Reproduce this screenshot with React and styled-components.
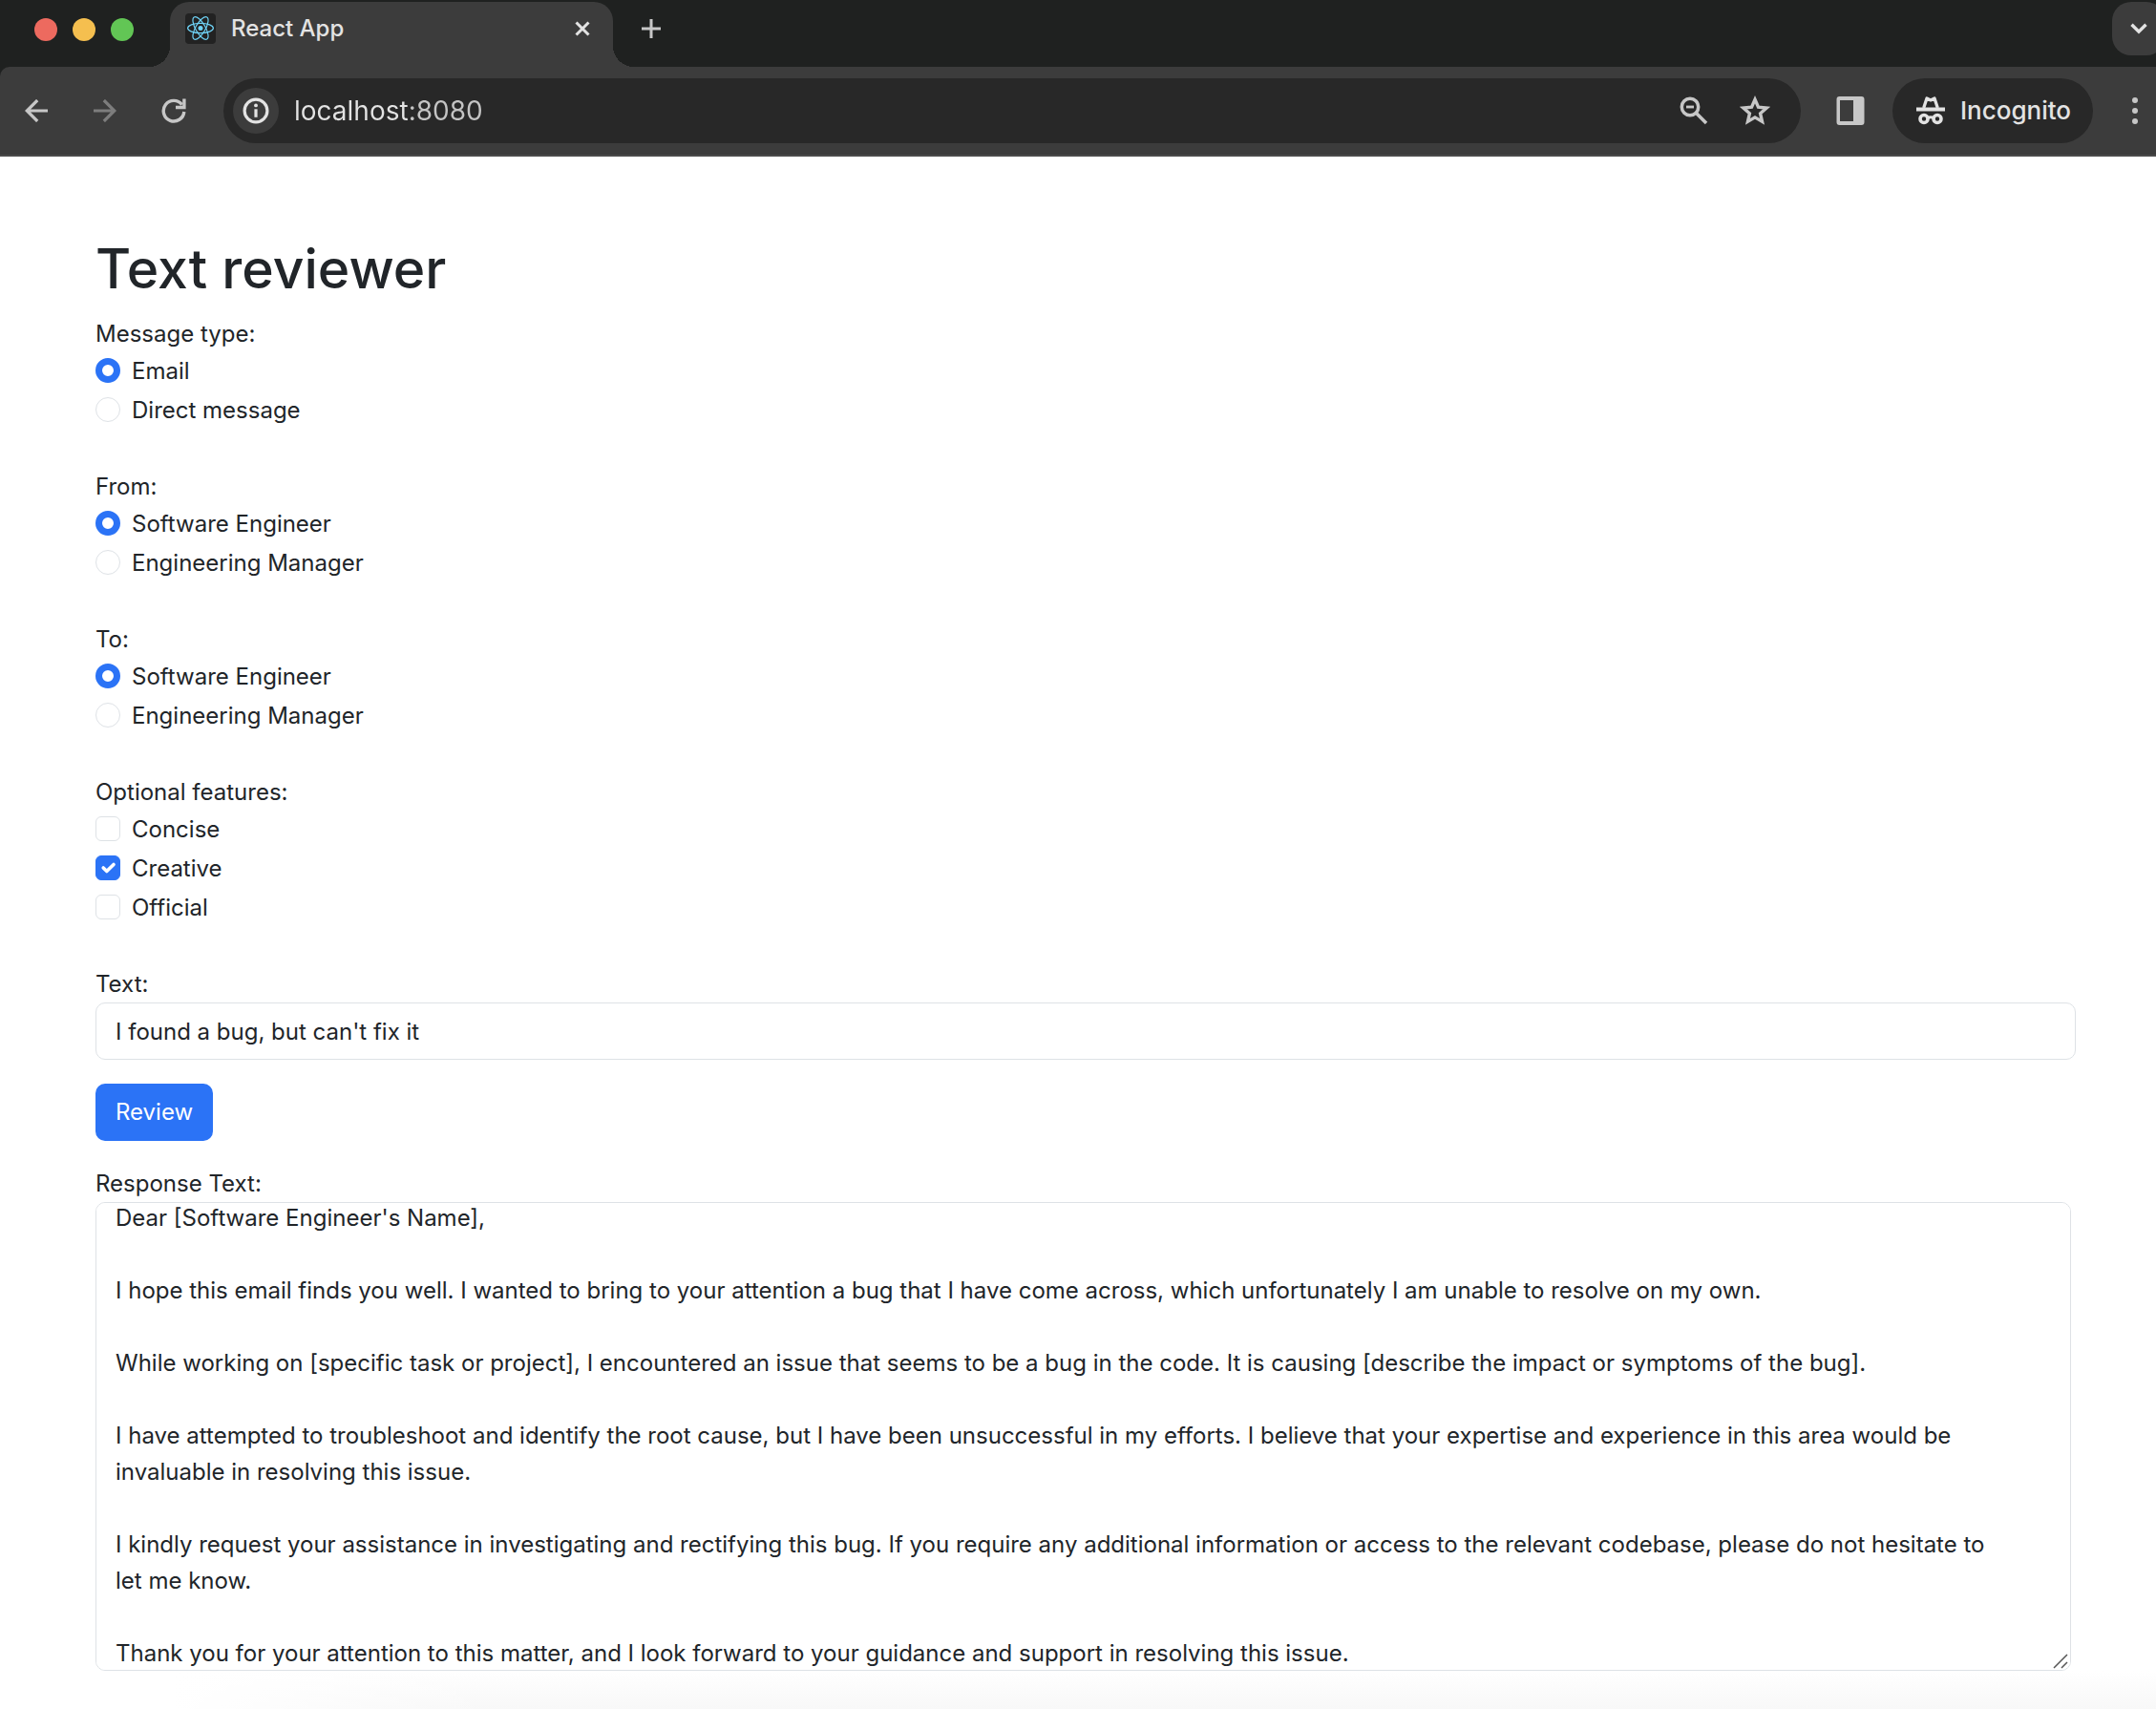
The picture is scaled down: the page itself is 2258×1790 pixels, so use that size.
import React, { useLayoutEffect, useRef, useState } from "react";
import styled, { createGlobalStyle } from "styled-components";

const GlobalStyle = createGlobalStyle`
  *, *::before, *::after { box-sizing: border-box; }
  body {
    margin: 0;
    background: #fff;
    color: #212529;
    font-family: Inter, "Liberation Sans", sans-serif;
    font-size: 24px;
    line-height: 38px;
  }
  button, input, textarea { font: inherit; color: inherit; }
  button { border: 0; padding: 0; background: none; cursor: pointer; }
`;

const Page = styled.div`
  display: flex;
  flex-direction: column;
  min-height: 100vh;
`;

/* ---------- Browser chrome ---------- */

const Chrome = styled.header`
  background: #1f2120;
  color: #e3e3e3;
`;

const TabStrip = styled.div`
  display: flex;
  height: 70px;
  padding: 2px 0 0 36px;
  overflow: hidden;
`;

const Lights = styled.div`
  display: flex;
  align-items: center;
  gap: 16px;
  height: 58px;
  margin-right: 38px;
`;

const Light = styled.button`
  width: 24px;
  height: 24px;
  border-radius: 50%;
  background: ${(p) => p.$color};
`;

const Tab = styled.div`
  position: relative;
  display: flex;
  align-items: center;
  gap: 16px;
  width: 464px;
  padding: 0 18px 12px 16px;
  border-radius: 20px 20px 0 0;
  background: #3c3c3c;

  &::before,
  &::after {
    content: "";
    position: absolute;
    bottom: 0;
    width: 22px;
    height: 22px;
  }
  &::before {
    right: 100%;
    background: radial-gradient(circle at 0 0, transparent 22px, #3c3c3c 22px);
  }
  &::after {
    left: 100%;
    background: radial-gradient(circle at 100% 0, transparent 22px, #3c3c3c 22px);
  }
`;

const TabTitle = styled.span`
  flex: 1;
  font-weight: 500;
`;

const IconButton = styled.button`
  display: grid;
  place-items: center;
  flex: none;
  width: ${(p) => p.$width || 40}px;
  height: 56px;
  color: ${(p) => (p.$dim ? "#7d7d7d" : "#c7c7c7")};
`;

const CloseTab = styled(IconButton)`
  color: #e3e3e3;
`;

const NewTab = styled(IconButton)`
  margin-left: 20px;
`;

const TabSearch = styled(IconButton)`
  margin: 0 -10px 0 auto;
  border-radius: 20px;
  background: #3c3c3c;
  color: #e3e3e3;
`;

const Toolbar = styled.div`
  display: flex;
  align-items: center;
  gap: 32px;
  padding: 12px 2px 12px 18px;
  border-bottom: 2px solid #4a4a4a;
  border-top-left-radius: 10px;
  background: #3c3c3c;
`;

const Omnibox = styled.div`
  flex: 1;
  display: flex;
  align-items: center;
  gap: 16px;
  height: 68px;
  padding: 0 24px 0 10px;
  border-radius: 34px;
  background: #282828;
`;

const SiteInfo = styled.button`
  display: grid;
  place-items: center;
  flex: none;
  width: 48px;
  height: 48px;
  border-radius: 50%;
  background: #3c3c3c;
  color: #e3e3e3;
`;

const Address = styled.input`
  flex: 1;
  min-width: 0;
  padding: 0;
  border: 0;
  outline: 0;
  font-size: 28px;
  color: transparent;
  caret-color: #e3e3e3;
  background: linear-gradient(to right, #e3e3e3 120px, #c4c4c4 120px);
  background-clip: text;
`;

const ToolbarEnd = styled.div`
  display: flex;
  align-items: center;
  gap: 24px;
`;

const Incognito = styled.button`
  display: flex;
  align-items: center;
  gap: 16px;
  width: 210px;
  height: 68px;
  padding-left: 25px;
  border-radius: 34px;
  background: #282828;
  color: #e3e3e3;
  font-size: 26px;
  font-weight: 500;
`;

/* ---------- Form ---------- */

const Main = styled.main`
  flex: 1;
  padding: 80px 84px 40px 100px;
  background:
    linear-gradient(to right, #fff 180px, transparent 520px) bottom / 100% 40px no-repeat,
    linear-gradient(to top, #f8f8f8, #fff) bottom / 100% 40px no-repeat;
`;

const Title = styled.h1`
  margin: 0 0 11px;
  font-size: 57px;
  font-weight: 500;
  line-height: 76px;
`;

const Group = styled.fieldset`
  margin: 0 0 39px;
  padding: 0;
  border: 0;
`;

const Legend = styled.legend`
  display: block;
  margin-bottom: 1px;
  padding: 0;
`;

const Choice = styled.label`
  display: flex;
  gap: 12px;
  height: 41px;
`;

const Mark = styled.input`
  appearance: none;
  flex: none;
  width: 26px;
  height: 26px;
  margin: 5px 0 0;
  border: 1px solid #dee2e6;
  border-radius: ${(p) => (p.type === "radio" ? "50%" : "6px")};
  background: #fff;

  &[type="radio"]:checked {
    border: 7px solid #2b73f6;
  }
  &[type="checkbox"]:checked {
    border-color: #2b73f6;
    background: #2b73f6
      url("data:image/svg+xml,%3csvg xmlns='http://www.w3.org/2000/svg' viewBox='0 0 20 20'%3e%3cpath fill='none' stroke='%23fff' stroke-linecap='round' stroke-linejoin='round' stroke-width='3' d='m6 10 3 3 6-6'/%3e%3c/svg%3e")
      center / contain;
  }
`;

const FieldLabel = styled.label`
  display: block;
`;

const TextInput = styled.input`
  display: block;
  width: 100%;
  height: 60px;
  padding: 0 20px;
  border: 1px solid #dee2e6;
  border-radius: 10px;
  background: #fff;
`;

const ReviewButton = styled.button`
  display: block;
  height: 60px;
  margin: 25px 0 26px;
  padding: 0 21px;
  border-radius: 10px;
  background: #2b73f6;
  color: #fff;
`;

const ResponseBox = styled.div`
  position: relative;
  margin-right: 5px;
`;

const Response = styled.textarea`
  display: block;
  width: 100%;
  height: 491px;
  padding: 10px 72px 10px 20px;
  border: 1px solid #dee2e6;
  border-radius: 10px;
  background: #fff;
  resize: none;
  scrollbar-width: none;
`;

const Grip = styled.svg`
  position: absolute;
  right: 3px;
  bottom: 2px;
  pointer-events: none;
`;

/* ---------- Icons ---------- */

const Icon = ({ w = 24, h = w, sw = 3, children }) => (
  <svg width={w} height={h} viewBox={`0 0 ${w} ${h}`} fill="none" stroke="currentColor" strokeWidth={sw} aria-hidden="true">
    {children}
  </svg>
);

const ReactLogo = () => (
  <svg width="32" height="32" viewBox="0 0 32 32" aria-hidden="true">
    <rect width="32" height="32" rx="4" fill="#222" />
    <circle cx="16" cy="15.5" r="2.5" fill="#6fd3f7" />
    <g fill="none" stroke="#6fd3f7" strokeWidth="1.2">
      {[0, 60, 120].map((a) => (
        <ellipse key={a} cx="16" cy="15.5" rx="13.4" ry="5.1" transform={`rotate(${a} 16 15.5)`} />
      ))}
    </g>
  </svg>
);

const CloseIcon = () => (
  <Icon w={16}>
    <path d="M1.5 1.5l13 13M14.5 1.5l-13 13" />
  </Icon>
);

const PlusIcon = () => (
  <Icon w={20}>
    <path d="M10 0v20M0 10h20" />
  </Icon>
);

const ChevronIcon = () => (
  <Icon w={18} h={12} sw={3.4}>
    <path d="M1.5 1.8L9 9.2l7.5-7.4" />
  </Icon>
);

const BackIcon = () => (
  <Icon sw={3.2}>
    <path d="M24 12H2.5M13.2 1L2.2 12l11 11" />
  </Icon>
);

const ForwardIcon = () => (
  <Icon sw={3.2}>
    <path d="M0 12h21.5M10.8 1l11 11-11 11" />
  </Icon>
);

const ReloadIcon = () => (
  <Icon w={28} sw={3.4}>
    <path d="M24.8 15A10.8 10.8 0 1 1 22.6 7.6" />
    <path d="M24.9 1.5V10.5H16" />
  </Icon>
);

const InfoIcon = () => (
  <Icon w={28} sw={3.2}>
    <circle cx="14" cy="14" r="11.9" />
    <path d="M14 12.3v8.5" />
    <circle cx="14" cy="8.4" r="1.9" fill="currentColor" stroke="none" />
  </Icon>
);

const ZoomIcon = () => (
  <Icon w={30} sw={3.5}>
    <circle cx="11" cy="11" r="8.7" />
    <path d="M7 11h8" strokeWidth="2.8" />
    <path d="M17 17l11 11" />
  </Icon>
);

const starPoints = Array.from({ length: 10 }, (_, i) => {
  const r = i % 2 ? 5.9 : 12.8;
  const a = (i * Math.PI) / 5;
  return `${18 + r * Math.sin(a)},${19 - r * Math.cos(a)}`;
}).join(" ");

const StarIcon = () => (
  <Icon w={36} sw={3.4}>
    <polygon points={starPoints} strokeMiterlimit="10" />
  </Icon>
);

const PanelIcon = () => (
  <Icon w={30}>
    <path
      fill="currentColor"
      stroke="none"
      fillRule="evenodd"
      d="M3.5 0h23a3 3 0 0 1 3 3v24a3 3 0 0 1-3 3h-23a3 3 0 0 1-3-3V3a3 3 0 0 1 3-3zM4 4v22h14V4z"
    />
  </Icon>
);

const IncognitoIcon = () => (
  <Icon w={30}>
    <path fill="currentColor" stroke="none" d="M0 11.5h30v4H0z" />
    <path d="M7.7 12L11 2l4 1.900L19 2l3.300 10" strokeWidth="3.3" strokeLinejoin="round" />
    <circle cx="8" cy="23.5" r="4" strokeWidth="3.6" />
    <circle cx="22" cy="23.5" r="4" strokeWidth="3.6" />
    <path d="M12 22.5q3-1.5 6 0" strokeWidth="2.8" />
  </Icon>
);

const MenuIcon = () => (
  <Icon w={6} h={28}>
    {[3, 14, 25].map((y) => (
      <circle key={y} cx="3" cy={y} r="3" fill="currentColor" stroke="none" />
    ))}
  </Icon>
);

/* ---------- Data ---------- */

const ROLES = ["Software Engineer", "Engineering Manager"];

const RADIO_GROUPS = [
  { name: "type", label: "Message type:", options: ["Email", "Direct message"] },
  { name: "from", label: "From:", options: ROLES },
  { name: "to", label: "To:", options: ROLES },
];

const FEATURES = ["Concise", "Creative", "Official"];

const RESPONSE = [
  "Dear [Software Engineer's Name],",
  "I hope this email finds you well. I wanted to bring to your attention a bug that I have come across, which unfortunately I am unable to resolve on my own.",
  "While working on [specific task or project], I encountered an issue that seems to be a bug in the code. It is causing [describe the impact or symptoms of the bug].",
  "I have attempted to troubleshoot and identify the root cause, but I have been unsuccessful in my efforts. I believe that your expertise and experience in this area would be invaluable in resolving this issue.",
  "I kindly request your assistance in investigating and rectifying this bug. If you require any additional information or access to the relevant codebase, please do not hesitate to let me know.",
  "Thank you for your attention to this matter, and I look forward to your guidance and support in resolving this issue.",
  "",
].join("\n\n");

function BrowserChrome() {
  return (
    <Chrome>
      <TabStrip>
        <Lights>
          <Light $color="#ed6a5f" aria-label="Close window" />
          <Light $color="#f5bf4f" aria-label="Minimize window" />
          <Light $color="#62c655" aria-label="Zoom window" />
        </Lights>
        <Tab>
          <ReactLogo />
          <TabTitle>React App</TabTitle>
          <CloseTab $width={28} aria-label="Close tab"><CloseIcon /></CloseTab>
        </Tab>
        <NewTab aria-label="New tab"><PlusIcon /></NewTab>
        <TabSearch $width={56} aria-label="Search tabs"><ChevronIcon /></TabSearch>
      </TabStrip>
      <Toolbar>
        <IconButton aria-label="Back"><BackIcon /></IconButton>
        <IconButton $dim aria-label="Forward"><ForwardIcon /></IconButton>
        <IconButton aria-label="Reload"><ReloadIcon /></IconButton>
        <Omnibox>
          <SiteInfo aria-label="View site information"><InfoIcon /></SiteInfo>
          <Address aria-label="Address" defaultValue="localhost:8080" />
          <IconButton $width={48} aria-label="Zoom"><ZoomIcon /></IconButton>
          <IconButton $width={48} aria-label="Bookmark this tab"><StarIcon /></IconButton>
        </Omnibox>
        <ToolbarEnd>
          <IconButton aria-label="Side panel"><PanelIcon /></IconButton>
          <Incognito><IncognitoIcon />Incognito</Incognito>
          <IconButton aria-label="Menu"><MenuIcon /></IconButton>
        </ToolbarEnd>
      </Toolbar>
    </Chrome>
  );
}

export default function App() {
  const [choice, setChoice] = useState({ type: 0, from: 0, to: 0 });
  const [features, setFeatures] = useState(["Creative"]);
  const [text, setText] = useState("I found a bug, but can't fix it");
  const response = useRef(null);

  useLayoutEffect(() => {
    response.current.scrollTop = 13;
  }, []);

  const toggle = (f) =>
    setFeatures((list) => (list.includes(f) ? list.filter((x) => x !== f) : [...list, f]));

  return (
    <Page>
      <GlobalStyle />
      <BrowserChrome />
      <Main>
        <Title>Text reviewer</Title>
        {RADIO_GROUPS.map((g) => (
          <Group key={g.name}>
            <Legend>{g.label}</Legend>
            {g.options.map((o, i) => (
              <Choice key={o}>
                <Mark
                  type="radio"
                  name={g.name}
                  checked={choice[g.name] === i}
                  onChange={() => setChoice({ ...choice, [g.name]: i })}
                />
                {o}
              </Choice>
            ))}
          </Group>
        ))}
        <Group>
          <Legend>Optional features:</Legend>
          {FEATURES.map((f) => (
            <Choice key={f}>
              <Mark type="checkbox" checked={features.includes(f)} onChange={() => toggle(f)} />
              {f}
            </Choice>
          ))}
        </Group>
        <FieldLabel htmlFor="text">Text:</FieldLabel>
        <TextInput id="text" value={text} onChange={(e) => setText(e.target.value)} />
        <ReviewButton type="button">Review</ReviewButton>
        <FieldLabel htmlFor="response">Response Text:</FieldLabel>
        <ResponseBox>
          <Response id="response" ref={response} defaultValue={RESPONSE} />
          <Grip width="16" height="16" viewBox="0 0 16 16" stroke="#555" strokeWidth="1.5" aria-hidden="true">
            <path d="M1 15L15 1M9 15l6-6" />
          </Grip>
        </ResponseBox>
      </Main>
    </Page>
  );
}
